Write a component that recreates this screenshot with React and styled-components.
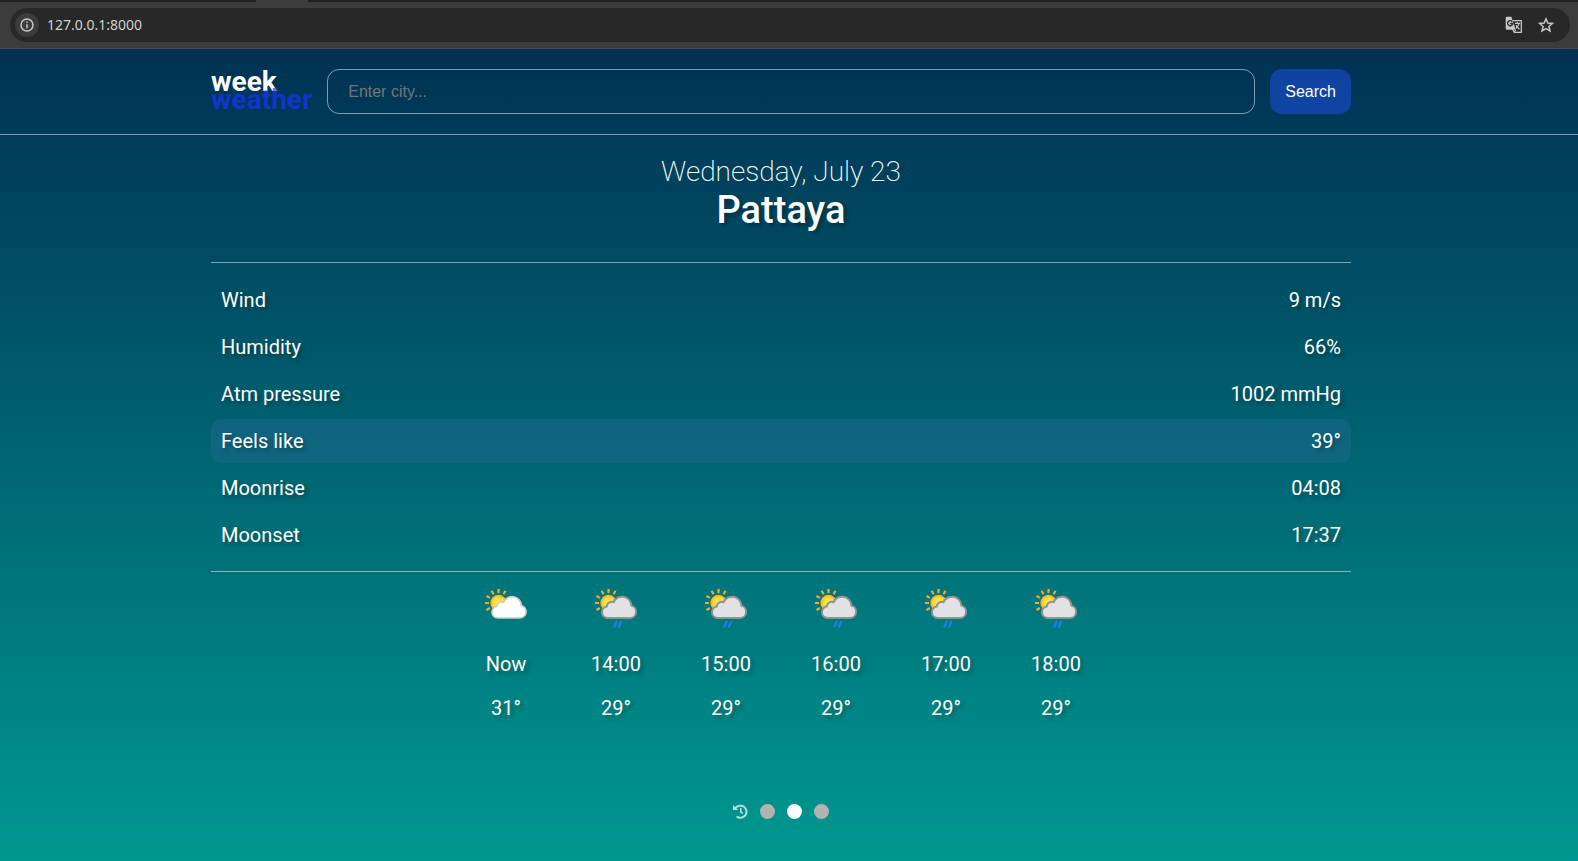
import React, { useState } from "react";
import styled, { createGlobalStyle, css } from "styled-components";

const GlobalStyle = createGlobalStyle`
  *, *::before, *::after { box-sizing: border-box; }
  body {
    margin: 0;
    background: #009890;
    color: #fff;
    font-family: Roboto, "Liberation Sans", sans-serif;
    font-size: 20px;
    line-height: 24px;
  }
`;

const Window = styled.div`
  display: flex;
  flex-direction: column;
  min-height: 100vh;
`;

/* Browser chrome */
const TabStrip = styled.div`
  display: flex;
  justify-content: flex-start;
  height: 2px;
  background: #202020;
`;

const ActiveTabFoot = styled.div`
  width: 52px;
  margin-left: 256px;
  background: #3c3c3c;
`;

const Toolbar = styled.div`
  padding: 6px 8px 6px 10px;
  background: #3c3c3c;
  border-bottom: 1px solid #4a4a4a;
`;

const AddressBar = styled.div`
  display: flex;
  align-items: center;
  gap: 8px;
  height: 34px;
  padding: 0 12px 0 5px;
  border-radius: 17px;
  background: #282828;
`;

const ChromeButton = styled.button`
  display: grid;
  place-items: center;
  width: 24px;
  height: 24px;
  padding: 0;
  border: 0;
  border-radius: 50%;
  background: ${({ $filled }) => ($filled ? "#3c3c3c" : "transparent")};
  color: #c7c7c7;
`;

const Address = styled.input`
  flex: 1;
  min-width: 0;
  padding: 0;
  border: 0;
  outline: 0;
  background: transparent;
  color: #d0d0d0;
  font: 14px/20px "Noto Sans", sans-serif;
`;

/* Weather page */
const Page = styled.div`
  display: flex;
  flex-direction: column;
  flex: 1;
  background: linear-gradient(180deg, #003153, #009890);
`;

const Header = styled.header`
  padding: 20px 16px 20px 0;
  border-bottom: 1px solid rgba(255, 255, 255, 0.5);
`;

const Container = styled.div`
  width: 100%;
  max-width: 1140px;
  margin: 0 auto;
`;

const SearchForm = styled.form`
  display: flex;
  align-items: center;
  gap: 15px;
`;

const Logo = styled.a`
  display: flex;
  flex-direction: column;
  padding-bottom: 2px;
  color: #fff;
  font-size: 28px;
  font-weight: 700;
  line-height: 18px;
  text-decoration: none;
`;

const LogoAccent = styled.span`
  color: rgba(28, 52, 255, 0.7);
`;

const field = css`
  height: 45px;
  border-radius: 12px;
  font: 16px/20px "Liberation Sans", sans-serif;
`;

const CityInput = styled.input`
  ${field}
  flex: 1;
  min-width: 0;
  padding: 0 20px;
  border: 1px solid rgba(255, 255, 255, 0.5);
  outline: 0;
  background: transparent;
  color: #fff;
  &::placeholder { color: #757575; }
`;

const SearchButton = styled.button`
  ${field}
  padding: 0 15px;
  border: 0;
  background: rgba(26, 76, 213, 0.6);
  color: #fff;
`;

const Main = styled.main`
  display: flex;
  flex: 1;
  padding: 20px 16px 42px 0;
`;

const Forecast = styled(Container)`
  display: flex;
  flex-direction: column;
`;

const Heading = styled.div`
  display: flex;
  flex-direction: column;
  align-items: center;
  padding-bottom: 31px;
`;

const DateLine = styled.p`
  margin: 0;
  font-size: 28px;
  font-weight: 200;
  line-height: 34px;
`;

const City = styled.h1`
  margin: 0;
  font-size: 38px;
  font-weight: 500;
  line-height: 42px;
  text-shadow: 3px 3px 4px rgba(0, 0, 0, 0.3);
`;

const Details = styled.dl`
  display: flex;
  flex-direction: column;
  gap: 3px;
  margin: 0;
  padding: 15px 0 14px;
  border: solid rgba(255, 255, 255, 0.5);
  border-width: 1px 0;
  text-shadow: 3px 3px 4px rgba(0, 0, 0, 0.3);
`;

const DetailRow = styled.div`
  display: flex;
  justify-content: space-between;
  padding: 10px;
  border-radius: 10px;
  background: ${({ $active }) => ($active ? "rgba(50, 110, 160, 0.3)" : "transparent")};
`;

const DetailValue = styled.dd`
  margin: 0;
`;

const Hours = styled.ul`
  display: flex;
  justify-content: center;
  gap: 10px;
  margin: 0;
  padding: 10px 0 0;
  list-style: none;
  text-shadow: 3px 3px 4px rgba(0, 0, 0, 0.3);
`;

const Hour = styled.li`
  display: flex;
  flex-direction: column;
  align-items: center;
  gap: 20px;
  width: 100px;
`;

const IconBox = styled.div`
  display: grid;
  place-items: center;
  width: 50px;
  height: 50px;
`;

const Pager = styled.nav`
  display: flex;
  justify-content: center;
  gap: 12px;
  margin-top: auto;
`;

const PagerButton = styled.button`
  display: grid;
  place-items: center;
  width: 15px;
  height: 15px;
  padding: 0;
  border: 0;
  border-radius: 50%;
  background: transparent;
  color: rgba(255, 255, 255, 0.7);
`;

const Dot = styled(PagerButton)`
  background: ${({ $active }) => ($active ? "#fff" : "#b3b3b3")};
`;

const InfoIcon = () => (
  <svg width="14" height="14" viewBox="0 0 14 14" fill="none" stroke="currentColor" strokeWidth="1.5" aria-hidden="true">
    <circle cx="7" cy="7" r="6" />
    <path d="M7 6.2v4M7 3.4v1.5" />
  </svg>
);

const TranslateIcon = () => (
  <svg width="18" height="18" viewBox="0 0 18 18" aria-hidden="true">
    <path d="M7.5 4.6H16.3V16.3H9.2L7.6 12.8" fill="none" stroke="currentColor" strokeWidth="1.3" />
    <path d="M2 .7H6.3L10.7 13.8H2A1.3 1.3 0 0 1 .7 12.5V2A1.3 1.3 0 0 1 2 .7Z" fill="currentColor" />
    <path d="M7.3 5.6A2.6 2.6 0 1 0 7.8 7.5H5.3" fill="none" stroke="#282828" strokeWidth="1.3" />
    <path d="M10 7.4h5M12.4 6v1.4M14.2 7.4c-.5 2.1-1.8 3.8-3.4 5.1M10.9 9c.8 1.7 2 3 3.7 4.2M10.7 13.8l-1.4 2.4" fill="none" stroke="currentColor" strokeWidth="1.1" />
  </svg>
);

const StarIcon = () => (
  <svg width="16" height="16" viewBox="0 0 16 16" fill="none" stroke="currentColor" strokeWidth="1.5" aria-hidden="true">
    <path d="M8 1.8 9.8 6l4.6.4-3.5 3 1.1 4.5L8 11.5l-4 2.4 1.1-4.5-3.5-3L6.2 6Z" />
  </svg>
);

const HistoryIcon = () => (
  <svg width="15" height="15" viewBox="0 0 15 15" fill="none" stroke="currentColor" strokeWidth="2" aria-hidden="true">
    <path d="M2.4 4.3A6.1 6.1 0 1 1 3.6 12.5" />
    <path d="M0 1.1V6H5Z" fill="currentColor" stroke="none" />
    <path d="M7.8 4V8L10 9.4" strokeWidth="1.6" />
  </svg>
);

const WeatherIcon = ({ rain, label }) => (
  <svg width="44" height="44" viewBox="0 0 44 44" role="img" aria-label={label}>
    <defs>
      <radialGradient id="sun">
        <stop offset="0" stopColor="#fff04a" />
        <stop offset="0.65" stopColor="#ffd93a" />
        <stop offset="1" stopColor="#fba51d" />
      </radialGradient>
    </defs>
    <g stroke="#f9a825" strokeWidth="2.2">
      <path d="M14.5 4V8M7.6 5.8 9.6 9.2M21.5 5.8 19.6 9.2M2.5 11 5.9 12.9M1 18H5M2.5 25 5.9 23" />
    </g>
    <circle cx="14.5" cy="18" r="8.2" fill="url(#sun)" />
    <path
      d="M13.5 33A5.8 5.8 0 0 1 12.7 21.5A5.1 5.1 0 0 1 19.6 17.2A9.3 9.3 0 0 1 37.4 20.6A6.3 6.3 0 0 1 35.7 33Z"
      fill={rain ? "#e2e2e4" : "#fff"}
      stroke={rain ? "#929296" : "#cbcbcb"}
      strokeWidth={rain ? 2 : 1.6}
    />
    {rain && <path d="M23 36 20 42.5M27.5 36 24.5 42.5" stroke="#1e80e8" strokeWidth="2.2" />}
  </svg>
);

const details = [
  ["Wind", "9 m/s"],
  ["Humidity", "66%"],
  ["Atm pressure", "1002 mmHg"],
  ["Feels like", "39°"],
  ["Moonrise", "04:08"],
  ["Moonset", "17:37"],
];

const hours = [
  { time: "Now", temp: "31°", rain: false },
  { time: "14:00", temp: "29°", rain: true },
  { time: "15:00", temp: "29°", rain: true },
  { time: "16:00", temp: "29°", rain: true },
  { time: "17:00", temp: "29°", rain: true },
  { time: "18:00", temp: "29°", rain: true },
];

export default function App() {
  const [day, setDay] = useState(1);
  return (
    <Window>
      <GlobalStyle />
      <TabStrip><ActiveTabFoot /></TabStrip>
      <Toolbar>
        <AddressBar>
          <ChromeButton $filled aria-label="Site information"><InfoIcon /></ChromeButton>
          <Address aria-label="Address" defaultValue="127.0.0.1:8000" />
          <ChromeButton aria-label="Translate this page"><TranslateIcon /></ChromeButton>
          <ChromeButton aria-label="Bookmark this page"><StarIcon /></ChromeButton>
        </AddressBar>
      </Toolbar>
      <Page>
        <Header>
          <Container>
            <SearchForm onSubmit={(e) => e.preventDefault()}>
              <Logo href="#">
                <span>week</span>
                <LogoAccent>weather</LogoAccent>
              </Logo>
              <CityInput aria-label="City" placeholder="Enter city..." />
              <SearchButton type="submit">Search</SearchButton>
            </SearchForm>
          </Container>
        </Header>
        <Main>
          <Forecast>
            <Heading>
              <DateLine>Wednesday, July 23</DateLine>
              <City>Pattaya</City>
            </Heading>
            <Details>
              {details.map(([name, value]) => (
                <DetailRow key={name} $active={name === "Feels like"}>
                  <dt>{name}</dt>
                  <DetailValue>{value}</DetailValue>
                </DetailRow>
              ))}
            </Details>
            <Hours>
              {hours.map(({ time, temp, rain }) => (
                <Hour key={time}>
                  <IconBox>
                    <WeatherIcon rain={rain} label={rain ? "Patchy rain" : "Partly cloudy"} />
                  </IconBox>
                  <span>{time}</span>
                  <span>{temp}</span>
                </Hour>
              ))}
            </Hours>
            <Pager aria-label="Forecast days">
              <PagerButton aria-label="Back to today" onClick={() => setDay(1)}><HistoryIcon /></PagerButton>
              {[0, 1, 2].map((i) => (
                <Dot key={i} $active={day === i} aria-label={`Day ${i + 1}`} onClick={() => setDay(i)} />
              ))}
            </Pager>
          </Forecast>
        </Main>
      </Page>
    </Window>
  );
}
